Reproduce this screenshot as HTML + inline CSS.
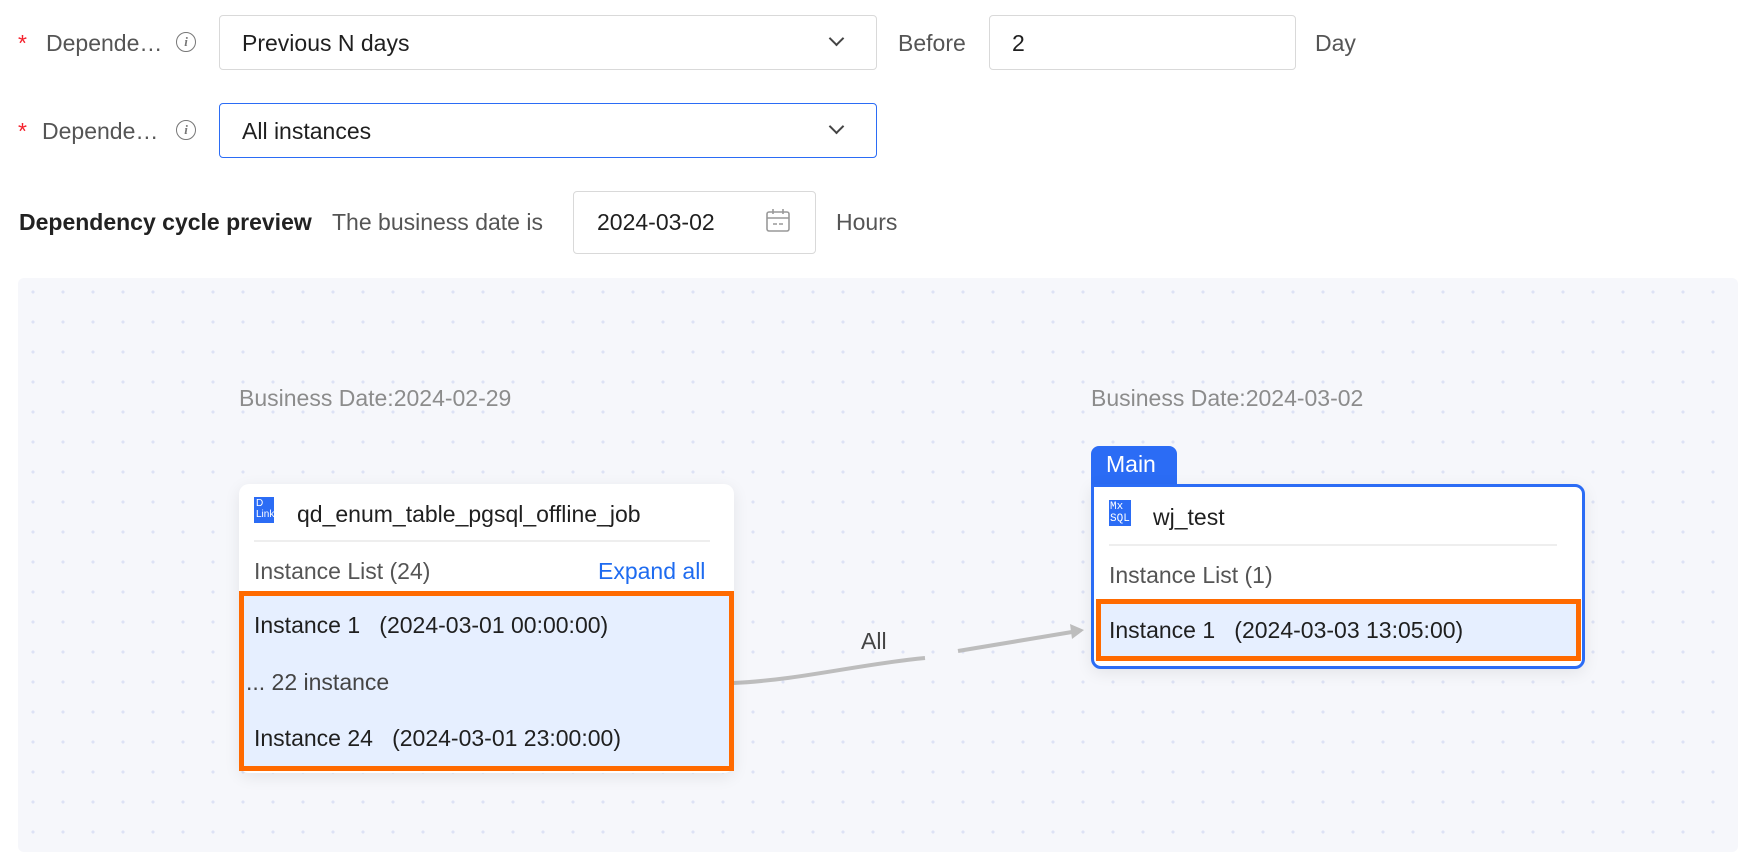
<!DOCTYPE html>
<html><head><meta charset="utf-8"><style>
*{box-sizing:border-box;margin:0;padding:0}
body{width:1758px;height:852px;background:#fff;font-family:"Liberation Sans",Arial,sans-serif;color:#1f1f1f;position:relative;overflow:hidden;font-size:23px}
.a{position:absolute;white-space:nowrap;line-height:26px}
.box{position:absolute;border:1.5px solid #d9d9d9;border-radius:4px;background:#fff}
.lbl{color:#555}
.star{color:#f5222d}
.info{position:absolute;width:20px;height:20px;border:1.6px solid #777;border-radius:50%;font-size:13px;color:#777;text-align:center;line-height:17px;font-style:italic;font-family:"Liberation Serif",serif;font-weight:bold}
.chev{position:absolute;width:11px;height:11px;border-right:2px solid #444;border-bottom:2px solid #444;transform:rotate(45deg)}
.canvas{position:absolute;left:18px;top:278px;width:1720px;height:574px;background-color:#f6f7fb;border-radius:6px;background-image:radial-gradient(circle,#dde2f5 1.4px,transparent 1.8px);background-size:30px 30px;background-position:0px -1px}
.card{position:absolute;background:#fff;border-radius:10px;box-shadow:0 4px 16px rgba(0,0,0,.08)}
.ic{position:absolute;background:#2b6cf5;color:#fff;padding:1px 2px;overflow:hidden}
</style></head><body>
<span class="a star" style="left:18px;top:30px">*</span>
<span class="a lbl" style="left:46px;top:30px">Depende…</span>
<div class="info" style="left:176px;top:32px">i</div>
<div class="box" style="left:219px;top:15px;width:658px;height:55px"></div>
<span class="a" style="left:242px;top:30px">Previous N days</span>
<div class="chev" style="left:831px;top:33px"></div>
<span class="a lbl" style="left:898px;top:30px">Before</span>
<div class="box" style="left:989px;top:15px;width:307px;height:55px"></div>
<span class="a" style="left:1012px;top:30px">2</span>
<span class="a lbl" style="left:1315px;top:30px">Day</span>

<span class="a star" style="left:18px;top:118px">*</span>
<span class="a lbl" style="left:42px;top:118px">Depende…</span>
<div class="info" style="left:176px;top:120px">i</div>
<div class="box" style="left:219px;top:103px;width:658px;height:55px;border-color:#2b6cf5"></div>
<span class="a" style="left:242px;top:118px">All instances</span>
<div class="chev" style="left:831px;top:121px"></div>

<span class="a" style="left:19px;top:209px;font-weight:bold;color:#222;font-size:23px">Dependency cycle preview</span>
<span class="a lbl" style="left:332px;top:209px">The business date is</span>
<div class="box" style="left:573px;top:191px;width:243px;height:63px"></div>
<span class="a" style="left:597px;top:209px">2024-03-02</span>
<svg class="a" style="left:765px;top:208px" width="26" height="26" viewBox="0 0 26 26" fill="none" stroke="#999" stroke-width="1.6"><rect x="2" y="4" width="22" height="19" rx="2"/><path d="M2 10h22M8 1v5M18 1v5M8 16h4M14 16h4"/></svg>
<span class="a lbl" style="left:836px;top:209px">Hours</span>

<div class="canvas"></div>
<span class="a" style="left:239px;top:385px;color:#8c8c8c;font-size:23px">Business Date:2024-02-29</span>
<span class="a" style="left:1091px;top:385px;color:#8c8c8c;font-size:23px">Business Date:2024-03-02</span>

<svg class="a" style="left:0;top:0" width="1758" height="852"><path d="M733 683 C800 680 860 664 925 658" stroke="#bdbdbd" stroke-width="4" fill="none"/><path d="M958 651 L1072 632" stroke="#bdbdbd" stroke-width="4" fill="none"/><path d="M1070 624 L1084 630 L1072 639 Z" fill="#bdbdbd"/></svg>
<span class="a" style="left:861px;top:628px;color:#444">All</span>

<div class="card" style="left:239px;top:484px;width:495px;height:289px"></div>
<div class="ic" style="left:254px;top:497px;width:20px;height:26px;font-size:10px;line-height:11px">D<br>Link</div>
<span class="a" style="left:297px;top:501px">qd_enum_table_pgsql_offline_job</span>
<div class="a" style="left:254px;top:540px;width:456px;height:2px;background:#eee"></div>
<span class="a" style="left:254px;top:558px;color:#555">Instance List (24)</span>
<span class="a" style="left:598px;top:558px;color:#1e6bf0">Expand all</span>
<div class="a" style="left:239px;top:591px;width:495px;height:180px;border:5px solid #ff6a00;background:#e6efff"></div>
<span class="a" style="left:254px;top:612px">Instance 1 &nbsp;&nbsp;(2024-03-01 00:00:00)</span>
<span class="a" style="left:246px;top:669px;color:#444">... 22 instance</span>
<span class="a" style="left:254px;top:725px">Instance 24 &nbsp;&nbsp;(2024-03-01 23:00:00)</span>

<div class="a" style="left:1091px;top:446px;width:86px;height:42px;background:#2b6cf5;border-radius:8px 8px 0 0"></div>
<span class="a" style="left:1106px;top:451px;color:#fff">Main</span>
<div class="card" style="left:1091px;top:484px;width:494px;height:185px;border:3px solid #2b6cf5;border-top-left-radius:0"></div>
<div class="ic" style="left:1109px;top:500px;width:22px;height:26px;font-size:11px;line-height:12px;font-family:'Liberation Mono',monospace;padding:1px">Mx<br>SQL</div>
<span class="a" style="left:1153px;top:504px">wj_test</span>
<div class="a" style="left:1109px;top:544px;width:448px;height:2px;background:#eee"></div>
<span class="a" style="left:1109px;top:562px;color:#555">Instance List (1)</span>
<div class="a" style="left:1096px;top:599px;width:485px;height:62px;border:5px solid #ff6a00;background:#e6efff"></div>
<span class="a" style="left:1109px;top:617px">Instance 1 &nbsp;&nbsp;(2024-03-03 13:05:00)</span>
</body></html>
